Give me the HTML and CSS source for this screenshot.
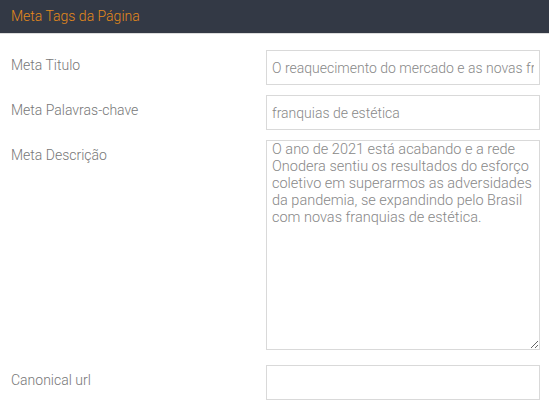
FILE: index.html
```html
<!DOCTYPE html>
<html lang="pt-BR">
<head>
<meta charset="utf-8">
<title>Meta Tags da Página</title>
<link rel="stylesheet" href="styles.css">
</head>
<body>
<div class="panel">
  <div class="panel-heading">Meta Tags da Página</div>
  <form class="panel-body">
    <div class="row">
      <label class="label" for="mt">Meta Titulo</label>
      <input class="field" id="mt" type="text" value="O reaquecimento do mercado e as novas franquias de estética">
    </div>
    <div class="row">
      <label class="label" for="mk">Meta Palavras-chave</label>
      <input class="field" id="mk" type="text" value="franquias de estética">
    </div>
    <div class="row row-area">
      <label class="label" for="md">Meta Descrição</label>
      <textarea class="field area" id="md">O ano de 2021 está acabando e a rede Onodera sentiu os resultados do esforço coletivo em superarmos as adversidades da pandemia, se expandindo pelo Brasil com novas franquias de estética.</textarea>
    </div>
    <div class="row">
      <label class="label" for="cu">Canonical url</label>
      <input class="field" id="cu" type="text" value="">
    </div>
  </form>
</div>
</body>
</html>
```
FILE: styles.css
```css
html, body {
  margin: 0;
  padding: 0;
  background: #fff;
  font-family: Roboto, "Liberation Sans", sans-serif;
}

.panel {
  width: 549px;
}

.panel-heading {
  height: 33px;
  line-height: 32px;
  padding-left: 11px;
  background: #333945;
  color: #e5891a;
  font-size: 14px;
  font-weight: 300;
  border-bottom: 1px solid #dcdcdc;
}

.panel-body {
  display: flex;
  flex-direction: column;
  gap: 10px;
  padding: 16px 10px 0 11px;
  margin: 0;
}

.row {
  display: grid;
  grid-template-columns: 255px 274px;
  align-items: start;
}

.row-area {
  margin-bottom: 5px;
}

.label {
  padding-top: 5px;
  line-height: 20px;
  font-size: 14px;
  font-weight: 300;
  color: #777;
}

.field {
  box-sizing: border-box;
  display: block;
  width: 274px;
  height: 35px;
  margin: 0;
  padding: 0 5px;
  border: 1px solid #d9d9d9;
  border-radius: 0;
  background: #fff;
  font-family: Roboto, "Liberation Sans", sans-serif;
  font-size: 14px;
  font-weight: 300;
  color: #888;
  outline: none;
}

.area {
  height: 210px;
  padding: 0 5px;
  font-size: 14.5px;
  line-height: 17px;
  resize: vertical;
  overflow: hidden;
}
```
